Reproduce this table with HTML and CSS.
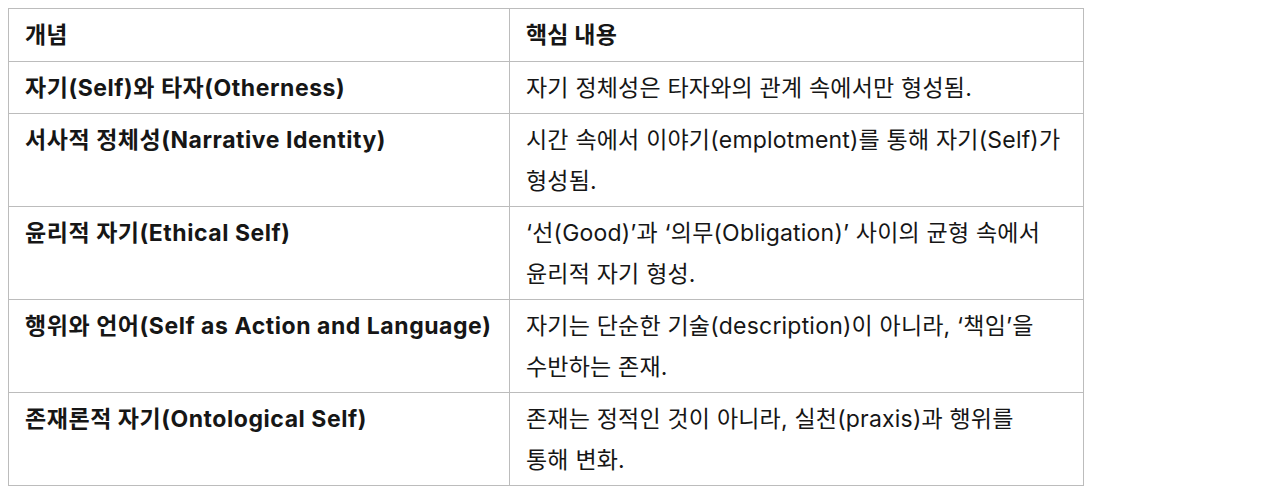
FILE: index.html
```html
<!DOCTYPE html>
<html lang="ko">
<head>
<meta charset="utf-8">
<link rel="stylesheet" href="styles.css">
</head>
<body>
<table class="concepts">
  <colgroup><col class="c1"><col class="c2"></colgroup>
  <thead>
    <tr><th>개념</th><th>핵심 내용</th></tr>
  </thead>
  <tbody>
    <tr><td class="term">자기(Self)와 타자(Otherness)</td><td>자기 정체성은 타자와의 관계 속에서만 형성됨.</td></tr>
    <tr><td class="term">서사적 정체성(Narrative Identity)</td><td>시간 속에서 이야기(emplotment)를 통해 자기(Self)가<br>형성됨.</td></tr>
    <tr><td class="term">윤리적 자기(Ethical Self)</td><td>‘선(Good)’과 ‘의무(Obligation)’ 사이의 균형 속에서<br>윤리적 자기 형성.</td></tr>
    <tr><td class="term">행위와 언어(Self as Action and Language)</td><td>자기는 단순한 기술(description)이 아니라, ‘책임’을<br>수반하는 존재.</td></tr>
    <tr><td class="term">존재론적 자기(Ontological Self)</td><td>존재는 정적인 것이 아니라, 실천(praxis)과 행위를<br>통해 변화.</td></tr>
  </tbody>
</table>
</body>
</html>
```

FILE: styles.css
```css
html, body {
  margin: 0;
  padding: 0;
  background: #ffffff;
}
body {
  padding: 8px;
  font-family: Inter, "Noto Sans CJK KR", sans-serif;
  color: #161616;
}
.concepts {
  border-collapse: collapse;
  width: 1075px;
  table-layout: fixed;
}
.c1 { width: 501px; }
.c2 { width: 574px; }
.concepts th,
.concepts td {
  border: 1px solid #bcbcbc;
  padding: 6px 16px 5px 16px;
  text-align: left;
  vertical-align: top;
  font-size: 23px;
  line-height: 40.5px;
  letter-spacing: 0.2px;
  font-weight: 400;
  white-space: nowrap;
}
.concepts th {
  font-weight: 700;
}
.concepts td.term {
  font-weight: 700;
  letter-spacing: 0.55px;
}
```
